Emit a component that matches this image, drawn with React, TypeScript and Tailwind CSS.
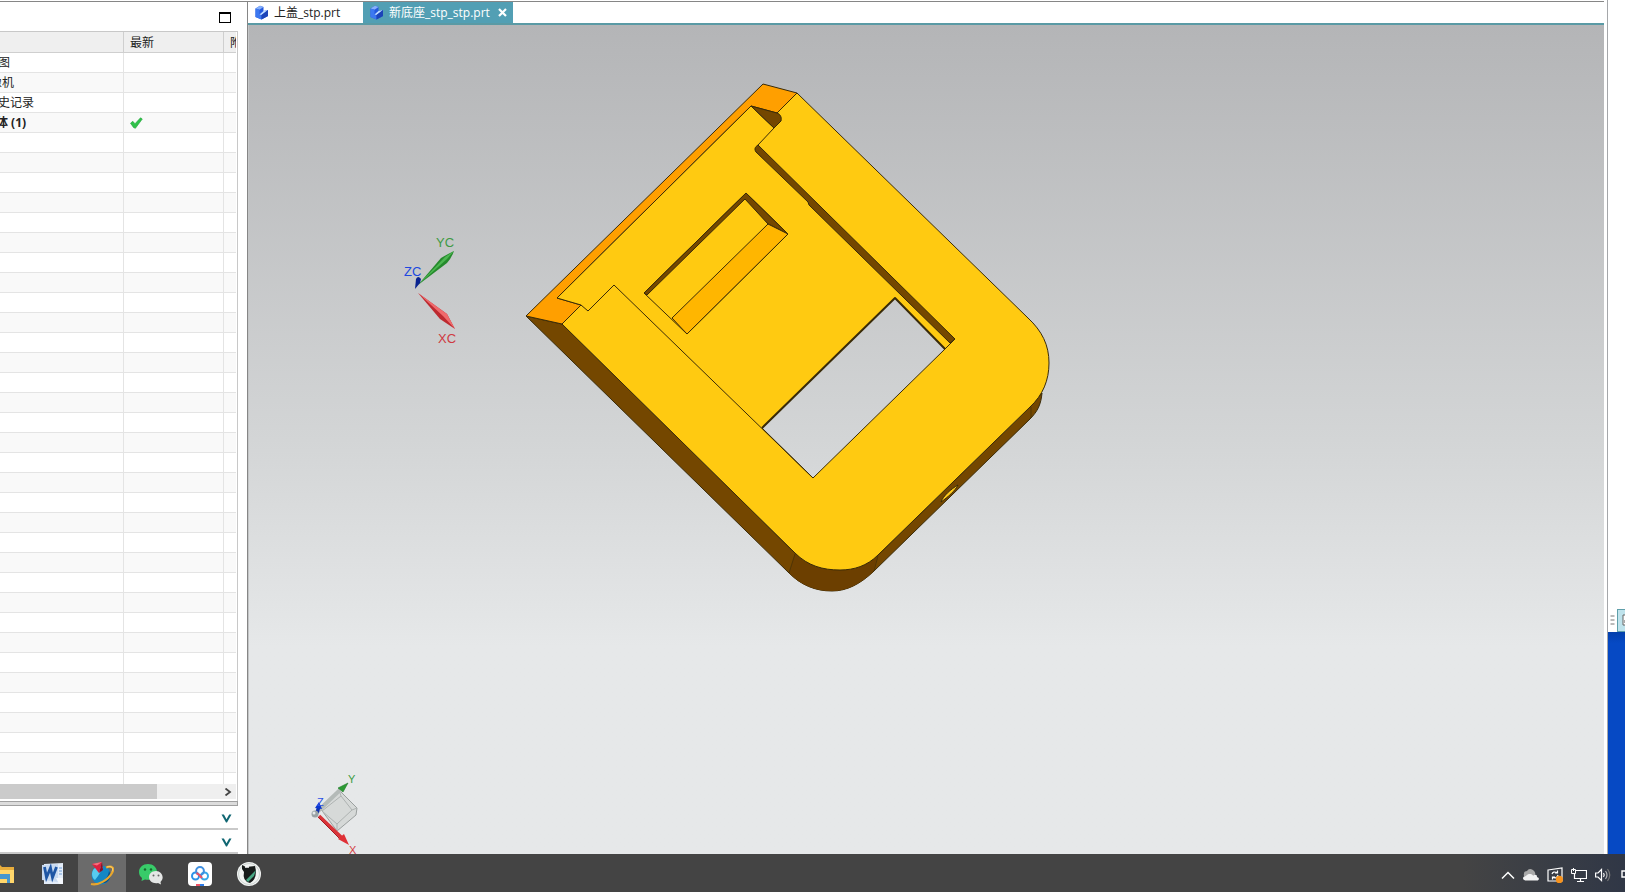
import type { ReactNode } from 'react';

type Row = { name: string; shift: string; bold?: boolean; upToDate?: boolean };

const rows: Row[] = [
  { name: '图', shift: '-ml-0.5' },
  { name: '像机', shift: '-ml-2.5' },
  { name: '史记录', shift: '-ml-0.5' },
  { name: '体 (1)', shift: '-ml-1', bold: true, upToDate: true },
];

const emptyRows = Array.from({ length: 33 }, (_, i) => i);

function PartIcon() {
  return (
    <svg width="14" height="15" viewBox="0 0 14 15" className="shrink-0">
      <path d="M0.500 3.500 5 0.800 8.500 2V6L13 5V11L6.500 14.500 0.500 12Z" fill="#2459de" />
      <path d="M0.500 3.500 5 0.800 8.500 2 4.500 4.800Z" fill="#86b0fb" />
      <path d="M0.500 3.500 4.500 4.800V9.500L6.500 10.500V14.500L0.500 12Z" fill="#3c78f0" />
      <path d="M4.500 9.500 8.500 6 13 5 6.500 10Z" fill="#c0dcff" />
      <path d="M6.500 10 13 5V11L6.500 14.500Z" fill="#1c44b8" />
    </svg>
  );
}

function CheckIcon() {
  return (
    <svg width="13" height="12" viewBox="0 0 13 12">
      <path d="M0.500 6.200 2.800 4.300 5 6.700 10.500 0.800 12.300 2 5.400 11.300 3.500 10.500Z" fill="#2fc24a" stroke="#1fa238" strokeWidth="0.600" />
    </svg>
  );
}

function SectionBar({ label }: { label: string }) {
  return (
    <button aria-label={label} className="flex h-6 w-full shrink-0 items-center justify-end border-b-2 border-[#c9c9c9] bg-white pt-0.5 pr-1.5">
      <svg width="11" height="9" viewBox="0 0 11 9">
        <path d="M0.500 0.500h2.400L5.500 5.200 8.200 0.500h2.300L6 8.500H5Z" fill="#0f6672" />
      </svg>
    </button>
  );
}

function Navigator() {
  return (
    <aside className="flex w-[248px] shrink-0 flex-col border-r border-[#868686] bg-white">
      <div className="flex h-[29px] shrink-0 items-center justify-end pt-0.5 pr-4">
        <button aria-label="最大化" className="h-[11px] w-3 border border-t-2 border-black" />
      </div>
      <div className="mr-[9px] flex min-h-0 flex-1 flex-col border-t border-r border-[#c8c8c8] pr-px">
        <div className="min-h-0 flex-1 overflow-hidden">
          <table className="w-full table-fixed border-separate border-spacing-0 text-xs leading-4 text-[#222]">
            <colgroup>
              <col className="w-[124px]" />
              <col className="w-[100px]" />
              <col />
            </colgroup>
            <thead>
              <tr className="h-[21px] bg-[#efefef] text-left">
                <th className="border-r border-b border-[#cfcfcf] p-0" />
                <th className="border-r border-b border-[#cfcfcf] p-0 pt-0.5 pl-1.5 font-normal">最新</th>
                <th className="overflow-hidden border-b border-[#cfcfcf] p-0 pt-0.5 pl-1.5 font-normal whitespace-nowrap">附</th>
              </tr>
            </thead>
            <tbody>
              {rows.map((row) => (
                <tr key={row.name} className="h-5 even:bg-[#f9f9f9]">
                  <td className="overflow-hidden border-r border-b border-[#e4e4e4] p-0 whitespace-nowrap">
                    <div className={`${row.shift} ${row.bold ? "font-['Noto_Sans','Noto_Sans_CJK_SC',sans-serif] font-bold" : ''}`}>
                      {row.name}
                    </div>
                  </td>
                  <td className="border-r border-b border-[#e4e4e4] p-0 pl-1.5">{row.upToDate && <CheckIcon />}</td>
                  <td className="border-b border-[#e4e4e4] p-0" />
                </tr>
              ))}
              {emptyRows.map((i) => (
                <tr key={i} className="h-5 even:bg-[#f9f9f9]">
                  <td className="border-r border-b border-[#e4e4e4] p-0" />
                  <td className="border-r border-b border-[#e4e4e4] p-0" />
                  <td className="border-b border-[#e4e4e4] p-0" />
                </tr>
              ))}
            </tbody>
          </table>
        </div>
        <div className="flex h-[15px] shrink-0 items-center justify-between bg-[#efefef]">
          <div className="h-full w-[157px] bg-[#cbcbcb]" />
          <button aria-label="向右滚动" className="mr-1">
            <svg width="8" height="8" viewBox="0 0 8 8">
              <path d="M1.500 0.500 6 4 1.500 7.500" fill="none" stroke="#444" strokeWidth="1.800" />
            </svg>
          </button>
        </div>
        <div className="h-0.5 shrink-0" />
      </div>
      <div className="mr-[9px] h-[5px] shrink-0 border-y border-r border-[#a0a0a0] bg-[#dcdcdc]" />
      <div className="mr-[9px] shrink-0">
        <SectionBar label="相关性" />
        <SectionBar label="细节" />
      </div>
    </aside>
  );
}

function Tabs() {
  return (
    <div role="tablist" className="flex h-[23px] shrink-0 border-b-2 border-[#5a9aa5] bg-white text-xs leading-4">
      <button role="tab" aria-selected={false} className="flex w-[115px] items-center gap-[5px] pl-[7px] text-[#222]">
        <PartIcon />
        上盖_stp.prt
      </button>
      <div className="flex w-[150px] items-center bg-[#529fb4] pl-[7px] text-white">
        <button role="tab" aria-selected className="flex items-center gap-[5px] whitespace-nowrap">
          <PartIcon />
          新底座_stp_stp.prt
        </button>
        <button aria-label="关闭" className="ml-2">
          <svg width="9" height="9" viewBox="0 0 9 9">
            <path d="M1 1 8 8M8 1 1 8" stroke="white" strokeWidth="2.200" />
          </svg>
        </button>
      </div>
    </div>
  );
}

function Model() {
  return (
    <g stroke="#3a2b08" strokeWidth="1" strokeLinejoin="round">
      {/* side walls */}
      <path d="M526 316 562 324 795 553 878 555 1030 407 1042 393C1041 404 1038 411 1030 419L873 572C860 584 847 591 832 591 815 591 801 585 789 573Z" fill="#744700" />
      <path d="M795 553C808 566 823 570 840 570 854 570 867 566 878 555L873 572C860 584 847 591 832 591 815 591 801 585 789 573Z" fill="#6c3f00" stroke="none" />
      <path d="M795 554 789 573M878 556 874 571M1031 407V418" fill="none" strokeWidth="0.600" />
      <path d="M941 502C943 496 951 489 958 485 955 491 948 497 941 502Z" fill="#ffc91a" />
      {/* end face */}
      <path d="M763 84 797 93 777 113 751 106 557 298 581 305 562 324 526 316Z" fill="#ff9f00" />
      {/* top face, with the window cut out */}
      <path
        fillRule="evenodd"
        d="M751 106 557 298 581 305 562 324 795 553C808 566 823 570 840 570 854 570 867 566 878 555L1030 407C1043 395 1049 380 1049 363 1049 345 1042 331 1028 318L797 93 777 113 774 128ZM762 428 895 298 945 349 813 478Z"
        fill="#ffca11"
      />
      <path d="M751 106 777 113C780 114 782 117 781 121L774 128Z" fill="#744700" />
      {/* rails */}
      <path d="M758 145C755 147 754 149 756 152L808 202 809 205 950 343 955 339Z" fill="#744700" />
      <path d="M774 128 758 145M955 339 945 349M581 305 588 311 614 285 813 478" fill="none" />
      <path d="M762 428 895 298 945 349" fill="none" strokeWidth="2" />
      {/* blind slot */}
      <path d="M746 193 788 234 687 334 644 293Z" fill="#ffca11" />
      <path d="M746 193 788 234 768 224 745 199 647 295 644 293Z" fill="#744700" />
      <path d="M768 224 788 234 687 334 672 318Z" fill="#ffb600" />
    </g>
  );
}

function WorkAxes() {
  return (
    <g fontSize="13">
      <path d="M418 285 441 258Q446 255 454 251 451 259 447 263Z" fill="#258a2c" />
      <path d="M418 285 445 257 454 251 447 259Z" fill="#4cb651" />
      <path d="M418 293 447 314 455 329 440 319Z" fill="#bd2a30" />
      <path d="M418 293 447 314 455 329 443 316Z" fill="#f06a6c" />
      <path d="M415 289 416 279Q418 275 421 279L420 283Z" fill="#0a2390" />
      <text x="436" y="247" fill="#3f9a45">YC</text>
      <text x="404" y="276" fill="#2048e0">ZC</text>
      <text x="438" y="343" fill="#cf3a42">XC</text>
    </g>
  );
}

function ViewTriad() {
  return (
    <g fontSize="11">
      <path d="M320 808 339 790 357 808 356 815 337 831Z" fill="#d6d9d8" stroke="#9ba09f" />
      <path d="M322 811 341 796 352 810 337 824ZM339 790 341 796M357 808 352 810M337 824V831" fill="none" stroke="#aeb3b2" />
      <path d="M317 812 340 790" stroke="#b4bab8" strokeWidth="4" />
      <path d="M338 788 348 783 343 792Z" fill="#2c9a34" stroke="#1c7a26" strokeWidth="0.600" />
      <path d="M319 816 342 838" stroke="#d93338" strokeWidth="3.500" />
      <path d="M318 817 341 840" stroke="#a51b22" />
      <path d="M338 839 344 834 349 845Z" fill="#df3036" />
      <path d="M317 813 319 806" stroke="#0d31ae" strokeWidth="3.500" />
      <path d="M315 808 319 802 322 809Z" fill="#0a36d0" />
      <circle cx="315" cy="814" r="3.500" fill="#9aa3a5" />
      <circle cx="314" cy="813" r="1.500" fill="#e6eaea" />
      <text x="348" y="783" fill="#3d9c43">Y</text>
      <text x="317" y="806" fill="#2a50e6">Z</text>
      <text x="349" y="854" fill="#d33b42">X</text>
    </g>
  );
}

function Viewport() {
  return (
    <div className="min-h-0 flex-1 overflow-hidden border-l border-[#c4c6c7] bg-linear-to-b from-[#b4b5b7] via-[#d3d5d6] via-50% to-[#e6e8e9] to-75%">
      <svg className="block h-full w-full font-['Liberation_Sans',sans-serif]">
        <g transform="translate(-249 -25)">
          <Model />
          <WorkAxes />
          <ViewTriad />
        </g>
      </svg>
    </div>
  );
}

function RightDock() {
  return (
    <div className="flex w-[18px] shrink-0 flex-col overflow-hidden border-l border-[#a5a7aa] bg-white">
      <div className="flex-1" />
      <div className="flex h-6 shrink-0 items-center gap-0.5 pl-0.5">
        <svg width="5" height="10" viewBox="0 0 5 10" className="shrink-0">
          <path d="M0.500 1H4.500M0.500 5H4.500M0.500 9H4.500" stroke="#777" />
        </svg>
        <button aria-label="面板" className="flex h-[23px] w-6 shrink-0 items-center border border-[#5f9faa] bg-[#bfe3ec] pl-1">
          <svg width="12" height="12" viewBox="0 0 12 12">
            <path d="M1 1H11V11H1Z" fill="#fff" stroke="#666" />
            <path d="M3 3.500H9M3 6H9V9H3Z" fill="#888" stroke="#555" />
          </svg>
        </button>
      </div>
      <div className="h-[222px] shrink-0 bg-[#0648c0] bg-linear-to-b from-[#0340ac] to-[#0649c4] to-5%" />
    </div>
  );
}

function TaskButton({ label, active, children }: { label: string; active?: boolean; children: ReactNode }) {
  return (
    <button aria-label={label} className={`flex h-full w-12 shrink-0 items-center justify-center pt-0.5 ${active ? 'bg-[#6b6b6b]' : ''}`}>
      <svg width="24" height="24" viewBox="0 0 24 24">{children}</svg>
    </button>
  );
}

function Taskbar() {
  return (
    <footer className="flex h-[38px] shrink-0 items-center justify-between overflow-hidden bg-[#444] bg-linear-to-r from-[#444] from-90% to-[#303746]">
      <div className="-ml-5 flex h-full gap-px">
        <TaskButton label="文件资源管理器">
          <path d="M0 3H8L10 5H22V21H0Z" fill="#e8ad3c" />
          <path d="M0 8H22V21H0Z" fill="#ffd66b" />
          <path d="M3 12H18V21H15V17H8V21H3Z" fill="#4697cf" />
        </TaskButton>
        <TaskButton label="Word">
          <path d="M3 2 22 1V22H3Z" fill="#e4edf9" />
          <path d="M1 3 17 2V20L1 18Z" fill="#c8daf1" />
          <path d="M3.500 5 5.500 15.500 9.500 6 11.500 15.500 15.500 5" fill="none" stroke="#1e56a5" strokeWidth="2.800" />
          <path d="M18 6H21M18 9H21M18 12H21" stroke="#6f9dd6" />
          <path d="M15 16H22V22H18Z" fill="#f4f8fd" />
        </TaskButton>
        <TaskButton label="NX" active>
          <circle cx="11" cy="13" r="9.500" fill="#1487c4" />
          <path d="M2 12C2 6 8 3 13 5 11 9 9 13 5 18 3 17 2 14 2 12Z" fill="#58cdf0" />
          <path d="M10 21C15 19 18 15 19 9 23 15 18 23 10 21Z" fill="#0b5187" />
          <path d="M16 5.500C22 3 25 6 22 11 18 18 8 24 1 22" fill="none" stroke="#e9a62b" strokeWidth="2.200" />
          <path d="M17 5C21 3.500 24 5.500 22 9.500" fill="none" stroke="#ffd978" strokeWidth="0.800" />
          <path d="M2 2 12 0 9 11Z" fill="#dc2140" />
          <path d="M12 0 13 8 9 11Z" fill="#8f1024" />
          <path d="M2 2 12 0 7 3.500Z" fill="#f5707c" />
        </TaskButton>
        <TaskButton label="微信">
          <path d="M9 2C4 2 0 5.500 0 10 0 12.500 1 14.500 3 16L2.500 19 6 17.500C12 19 18 15.500 18 10 18 5.500 14 2 9 2Z" fill="#38cb69" />
          <circle cx="6" cy="7.500" r="1.200" fill="#17662f" />
          <circle cx="12" cy="7.500" r="1.200" fill="#17662f" />
          <path d="M17 9C12.500 9 10 12 10 15 10 19 14 22 19 21L22 22.500 21.500 20C26 16 23 9 17 9Z" fill="#e4e6e5" />
          <circle cx="14.500" cy="13.500" r="1" fill="#666" />
          <circle cx="19.500" cy="13.500" r="1" fill="#666" />
        </TaskButton>
        <TaskButton label="百度网盘">
          <rect width="24" height="24" rx="4" fill="white" />
          <circle cx="7.500" cy="14" r="3.500" fill="none" stroke="#2c93e8" strokeWidth="2" />
          <circle cx="16.500" cy="14" r="3.500" fill="none" stroke="#37a8e8" strokeWidth="2" />
          <circle cx="12" cy="9" r="3.900" fill="none" stroke="#3f8fe0" strokeWidth="2" />
          <path d="M8.500 11Q11 12 14 16" fill="none" stroke="#ed5265" strokeWidth="2.200" />
          <path d="M8 23H12" stroke="#ed5265" strokeWidth="2" />
          <path d="M12 23H16" stroke="#2c7be8" strokeWidth="2" />
        </TaskButton>
        <TaskButton label="录屏">
          <circle cx="12" cy="12" r="12" fill="#f2f4f3" />
          <circle cx="12" cy="12" r="10.500" fill="none" stroke="#ccd3d0" />
          <path d="M5 3 9 5 18 4 19 9Q19 18 13 21 5 19 7 10L5 7Z" fill="#171b1a" />
          <path d="M9 18 19 8 17 14 11 20Z" fill="#48a884" />
          <path d="M8 5H12" stroke="#fff" strokeWidth="1.500" />
        </TaskButton>
      </div>
      <div className="-mr-2.5 flex items-center gap-2 pt-1 text-white">
        <button aria-label="显示隐藏的图标">
          <svg width="14" height="16" viewBox="0 0 14 16">
            <path d="M1 11.500 7 5.500 13 11.500" fill="none" stroke="currentColor" strokeWidth="1.500" />
          </svg>
        </button>
        <button aria-label="OneDrive">
          <svg width="16" height="16" viewBox="0 0 16 16">
            <path d="M1 9Q0 4 4 4 6 0.500 10 3 13 5 12 8L5 11Z" fill="#a9a9a9" />
            <path d="M3 13.500C-1 13.500-1 9 3 9 5 6.500 8 6.500 10 8.500 13 7 14 8 14 10 17 11 16 13.500 14 13.500Z" fill="#f2f2f2" />
          </svg>
        </button>
        <button aria-label="更新">
          <svg width="16" height="16" viewBox="0 0 16 16">
            <path d="M1 3 15 1V14H1Z" fill="none" stroke="currentColor" strokeWidth="1.200" />
            <path d="M5 7Q6 4 10 5.500M10.500 3.500V6H8M11 8Q10 12 6 10.500M5.500 12.500V10H8" fill="none" stroke="currentColor" strokeWidth="1.200" />
            <circle cx="12.400" cy="12.400" r="3.600" fill="#f7931e" />
          </svg>
        </button>
        <button aria-label="网络">
          <svg width="16" height="16" viewBox="0 0 16 16">
            <path d="M5 3.500H15.500V11.500H3.500V7M9.500 11.500V14.500M6 14.500H13" fill="none" stroke="currentColor" strokeWidth="1.200" />
            <path d="M0.500 2.500H4.500V6.500H0.500ZM2.500 1V4" fill="none" stroke="currentColor" />
          </svg>
        </button>
        <button aria-label="音量">
          <svg width="16" height="16" viewBox="0 0 16 16">
            <path d="M0.600 6H3L6.500 2.500V13.500L3 10H0.600Z" fill="none" stroke="currentColor" strokeWidth="1.200" />
            <path d="M8.500 6Q10 8 8.500 10" fill="none" stroke="currentColor" strokeWidth="1.200" />
            <path d="M10.500 4Q13.500 8 10.500 12" fill="none" stroke="#b5b5b5" strokeWidth="1.200" />
            <path d="M12.500 2Q17 8 12.500 14" fill="none" stroke="#777" strokeWidth="1.200" />
          </svg>
        </button>
        <button aria-label="电池">
          <svg width="16" height="16" viewBox="0 0 16 16">
            <path d="M3 4H15V10H3Z" fill="none" stroke="currentColor" strokeWidth="1.400" />
          </svg>
        </button>
      </div>
    </footer>
  );
}

export default function App() {
  return (
    <div className="flex h-screen flex-col overflow-hidden bg-white font-['Open_Sans','Noto_Sans_CJK_SC',sans-serif]">
      <div className="flex min-h-0 flex-1">
        <div className="flex min-w-0 flex-1 pt-px pr-[3px]">
          <div className="flex min-w-0 flex-1 border-t border-[#868686]">
            <Navigator />
            <main className="flex min-w-0 flex-1 flex-col">
              <Tabs />
              <Viewport />
            </main>
          </div>
        </div>
        <RightDock />
      </div>
      <Taskbar />
    </div>
  );
}
